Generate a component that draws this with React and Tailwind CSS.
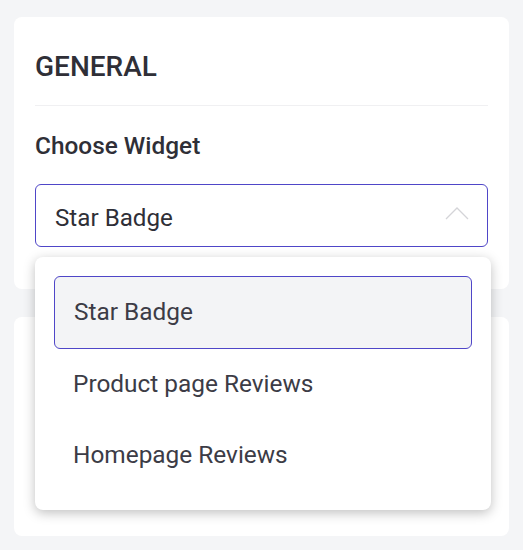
export default function App() {
  const options = ["Star Badge", "Product page Reviews", "Homepage Reviews"];
  return (
    <div className="min-h-[550px] w-[523px] bg-[#f4f5f7] px-[14px] pt-[17px] font-['Roboto',sans-serif] text-[#2f2f37]">
      <div className="relative rounded-[8px] bg-white px-[21px] pb-[42px] pt-[34px] w-[495px]">
        <h2 className="text-[28px] font-medium leading-[32px]">GENERAL</h2>
        <div className="mt-[22px] h-px bg-[#f0f0f2]" />
        <div className="mt-[26px] text-[24.4px] font-medium leading-[28px]">Choose Widget</div>
        <div className="relative mt-[24px]">
          <div className="flex h-[63px] items-center justify-between rounded-[6px] border border-[#4f46c8] pl-[19px] pr-[17px]">
            <span className="mt-[6px] text-[24.2px] leading-none">Star Badge</span>
            <svg width="26" height="16" viewBox="0 0 26 16" fill="none" className="-mt-[5px]">
              <path d="M2 14 L13 3 L24 14" stroke="#d4d4d8" strokeWidth="1.3" />
            </svg>
          </div>
          <div className="absolute left-0 top-[73px] z-10 w-[456px] rounded-[8px] bg-white p-[19px] shadow-[0_3px_12px_rgba(0,0,0,0.25)]">
            {options.map((o, i) => (
              <div
                key={o}
                className={
                  i === 0
                    ? "flex h-[73px] items-center rounded-[6px] border border-[#4f46c8] bg-[#f3f4f6] pl-[19px] text-[24.4px] text-[#3c3c46]"
                    : "flex h-[71px] items-center pl-[19px] text-[24.4px] text-[#3c3c46]"
                }
              >
                {o}
              </div>
            ))}
          </div>
        </div>
      </div>
      <div className="mt-[28px] h-[219px] w-[495px] rounded-[8px] bg-white" />
    </div>
  );
}
